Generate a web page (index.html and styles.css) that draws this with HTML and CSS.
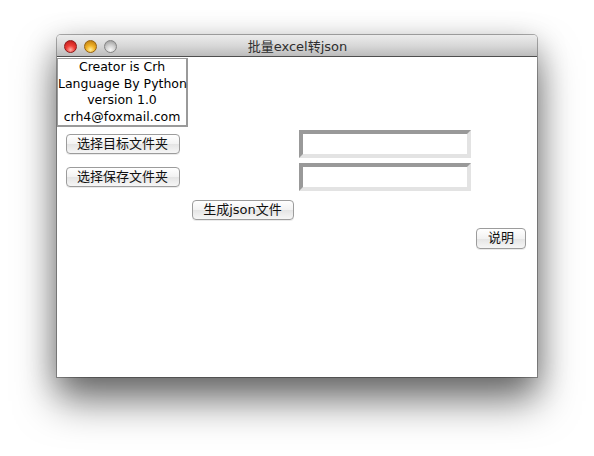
FILE: index.html
```html
<!DOCTYPE html>
<html lang="zh">
<head>
<meta charset="utf-8">
<title>批量excel转json</title>
<link rel="stylesheet" href="styles.css">
</head>
<body>
<div class="window">
  <div class="titlebar">
    <div class="lights">
      <span class="light red"></span>
      <span class="light yellow"></span>
      <span class="light gray"></span>
    </div>
    <div class="title">批量excel转json</div>
  </div>
  <div class="content">
    <div class="info">Creator is Crh<br>Language By Python<br>version 1.0<br>crh4@foxmail.com</div>
    <div class="btn c0 r1">选择目标文件夹</div>
    <div class="entry c2 r1"></div>
    <div class="btn c0 r2">选择保存文件夹</div>
    <div class="entry c2 r2"></div>
    <div class="btn c1 r3 gen">生成json文件</div>
    <div class="btn c3 r4 help">说明</div>
  </div>
</div>
</body>
</html>
```

FILE: styles.css
```css
html, body {
  margin: 0;
  padding: 0;
  background: #ffffff;
}
body {
  width: 594px;
  height: 456px;
  overflow: hidden;
  font-family: "DejaVu Sans", "Noto Sans CJK SC", sans-serif;
}
.window {
  margin: 35px 0 0 57px;
  width: 480px;
  height: 342px;
  border-radius: 4px 4px 0 0;
  box-shadow: 0 24px 40px rgba(0, 0, 0, 0.5), 0 8px 30px rgba(0, 0, 0, 0.25), 0 0 0 1px rgba(0, 0, 0, 0.3);
  background: #ffffff;
  display: flex;
  flex-direction: column;
}
.titlebar {
  height: 21px;
  flex: none;
  border-radius: 4px 4px 0 0;
  background: linear-gradient(#ececec, #d8d8d8 50%, #bcbcbc);
  border-bottom: 1px solid #4e4e4e;
  display: flex;
  align-items: center;
  position: relative;
}
.lights {
  display: flex;
  gap: 7px;
  padding-left: 7px;
  padding-top: 1px;
}
.light {
  width: 13px;
  height: 13px;
  border-radius: 50%;
  box-sizing: border-box;
}
.red {
  background: radial-gradient(circle at 50% 80%, #ffb0a8 0, #f0403a 40%, #b81414 100%);
  border: 1px solid #8e1a1a;
}
.yellow {
  background: radial-gradient(circle at 50% 80%, #fff0a0 0, #f2b42a 40%, #b4740a 100%);
  border: 1px solid #966210;
}
.gray {
  background: radial-gradient(circle at 50% 80%, #f8f8f8 0, #d0d0d0 45%, #939393 100%);
  border: 1px solid #848484;
}
.title {
  position: absolute;
  left: 0;
  right: 0;
  top: 0;
  bottom: 0;
  display: flex;
  align-items: center;
  justify-content: center;
  font-size: 13px;
  color: #2e2e2e;
  padding-left: 1px;
}
.content {
  flex: 1;
  display: grid;
  grid-template-columns: 131px 111px 172px 60px;
  grid-template-rows: 72px 30px 36px 29px 28px;
  align-items: center;
  justify-items: center;
  font-size: 13px;
  color: #000;
}
.info {
  grid-column: 1;
  grid-row: 1;
  align-self: start;
  margin-top: 1px;
  width: 131px;
  height: 69px;
  box-sizing: border-box;
  border: 1px solid #9a9a9a;
  border-right-width: 2px;
  border-bottom-width: 2px;
  text-align: center;
  line-height: 16.5px;
  font-size: 12.5px;
  white-space: nowrap;
}
.btn {
  box-sizing: border-box;
  height: 20px;
  border: 1px solid #9c9c9c;
  border-radius: 4px;
  background: linear-gradient(#ffffff, #f2f2f2 50%, #e4e4e4 51%, #f6f6f6);
  font-size: 13px;
  line-height: 18px;
  text-align: center;
  box-shadow: 0 1px 0 rgba(0, 0, 0, 0.08);
  color: #111;
}
.c0 { grid-column: 1; width: 114px; }
.c1 { grid-column: 2; }
.c2 { grid-column: 3; }
.c3 { grid-column: 4; }
.r1 { grid-row: 2; }
.r2 { grid-row: 3; }
.r3 { grid-row: 4; }
.r4 { grid-row: 5; }
.gen { width: 102px; margin-left: -2px; }
.help { width: 50px; height: 21px; }
.entry {
  width: 172px;
  height: 28px;
  box-sizing: border-box;
  border-style: solid;
  border-width: 4px;
  border-color: #999999 #e3e3e3 #e3e3e3 #999999;
  background: #ffffff;
}
```
